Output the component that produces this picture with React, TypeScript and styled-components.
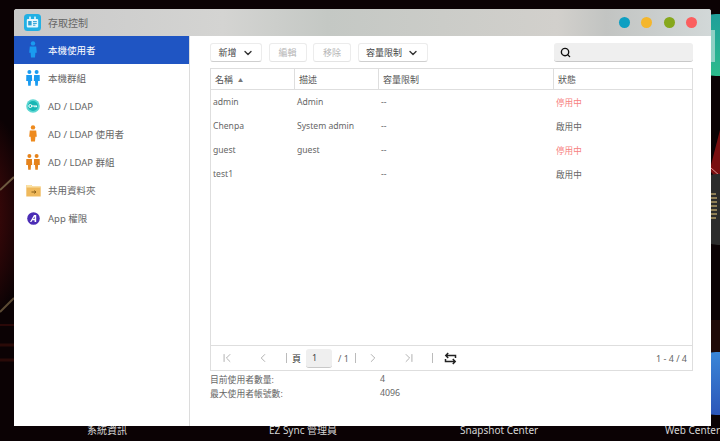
import React from 'react';
import styled, { createGlobalStyle } from 'styled-components';
import { ChevronDown, ChevronLeft, ChevronRight, ChevronFirst, ChevronLast, Search } from 'lucide-react';

const GlobalStyle = createGlobalStyle`
  html, body { margin: 0; padding: 0; height: 100%; }
  body { font-family: "Noto Sans", "Noto Sans CJK TC", sans-serif; font-size: 9.5px; color: #555; }
  #root { height: 100%; }
`;

interface UserRow {
  name: string;
  desc: string;
  quota: string;
  status: string;
  disabled?: boolean;
}

const users: UserRow[] = [
  { name: 'admin', desc: 'Admin', quota: '--', status: '停用中', disabled: true },
  { name: 'Chenpa', desc: 'System admin', quota: '--', status: '啟用中' },
  { name: 'guest', desc: 'guest', quota: '--', status: '停用中', disabled: true },
  { name: 'test1', desc: '', quota: '--', status: '啟用中' },
];

const PersonIcon = ({ color }: { color: string }) => (
  <svg width="10" height="18" viewBox="0 0 10 18">
    <circle cx="5" cy="2.4" r="2.2" fill={color} />
    <path d="M1.8 5.5h6.4l.6 6.2H7.4L7 16.5H3l-.4-4.8H1.2z" fill={color} />
  </svg>
);

const PairIcon = ({ color }: { color: string }) => (
  <svg width="14" height="16" viewBox="0 0 14 16">
    <circle cx="3.4" cy="2" r="2" fill={color} />
    <circle cx="10.6" cy="2" r="2" fill={color} />
    <path d="M.3 5h5.6l.3 6H5l-.3 4.8H2.2L1.9 11H.2z" fill={color} />
    <path d="M8.1 5h5.6l.1 6h-1.7l-.3 4.8H9.3L9 11H7.8z" fill={color} />
  </svg>
);

const KeyIcon = () => (
  <svg width="14" height="14" viewBox="0 0 14 14">
    <circle cx="7" cy="7" r="6.8" fill="#5bd6d2" />
    <circle cx="7" cy="7" r="5" fill="#19b6b4" />
    <circle cx="4.3" cy="7" r="1.5" fill="none" stroke="#fff" strokeWidth="1" />
    <path d="M5.8 7h5.2M9 7v1.4M10.6 7v1.2" stroke="#fff" strokeWidth="1" fill="none" />
  </svg>
);

const FolderIcon = () => (
  <svg width="15" height="13" viewBox="0 0 15 13">
    <path d="M.3 1h5l1.2 1.4h8.2V12.6H.3z" fill="#efb95c" />
    <path d="M.3 1h5l1.2 1.4h8.2v1.2H.3z" fill="#fbe2a6" />
    <path d="M5.5 8h4.4M8.3 6.6 9.9 8 8.3 9.4" stroke="#7a5310" strokeWidth=".9" fill="none" />
  </svg>
);

const AppIcon = () => (
  <svg width="13" height="13" viewBox="0 0 13 13">
    <circle cx="6.5" cy="6.5" r="6.3" fill="#4b2db5" />
    <path d="M3 10 7 3h2.2v7H7.6V8.2H5.4L4.4 10z" fill="#fff" />
    <path d="M6.1 7h1.5V4.6z" fill="#4b2db5" />
  </svg>
);

const AppLogo = () => (
  <svg width="17" height="17" viewBox="0 0 17 17">
    <rect width="17" height="17" rx="3.5" fill="#22b0e4" />
    <rect x="5" y="2.6" width="2" height="3" fill="#bfeafa" />
    <rect x="10" y="2.6" width="2" height="3" fill="#bfeafa" />
    <rect x="2.8" y="5" width="11.4" height="8.6" rx="1" fill="#e6f7fd" />
    <rect x="4.2" y="7" width="3.4" height="4.4" fill="#2a9fd4" />
    <path d="M9 7.6h3.8M9 9.4h3.8M9 11.2h2.4" stroke="#2a9fd4" strokeWidth="1" />
  </svg>
);

const SwapIcon = () => (
  <svg width="13" height="13" viewBox="0 0 13 13" fill="none" stroke="#222" strokeWidth="1.5">
    <path d="M11.5 6V3.5H1.8M4.2 1 1.8 3.5 4.2 6" />
    <path d="M1.5 7v2.5h9.7M8.8 7l2.4 2.5L8.8 12" />
  </svg>
);

// desktop behind the window: wallpaper streaks and the app tiles peeking out
const WallpaperArt = () => (
  <WallpaperSvg width="720" height="441" viewBox="0 0 720 441">
    <defs>
      <radialGradient id="glowLeft" cx="0.2" cy="0.5" r="0.6">
        <stop offset="0" stopColor="#5a0c0c" />
        <stop offset="1" stopColor="#5a0c0c" stopOpacity="0" />
      </radialGradient>
      <linearGradient id="tealFill" x1="0" y1="0" x2="0" y2="1">
        <stop offset="0" stopColor="#1f9f9a" />
        <stop offset="1" stopColor="#2dbb8c" />
      </linearGradient>
      <linearGradient id="blueFill" x1="0" y1="0" x2="0" y2="1">
        <stop offset="0" stopColor="#3a86d8" />
        <stop offset="1" stopColor="#2c56b8" />
      </linearGradient>
    </defs>
    <ellipse cx="0" cy="215" rx="50" ry="95" fill="url(#glowLeft)" />
    <path d="M0 190 14 177" stroke="#6e5a40" strokeWidth="2" />
    <path d="M0 312 14 298" stroke="#5c4a34" strokeWidth="2" />
    <path d="M0 325h14" stroke="#4a0f0c" strokeWidth="1" />
    <path d="M0 345h14M0 360h14" stroke="#2a0a08" strokeWidth="3" />
    <path d="M711 165 720 130V182L711 172z" fill="#7a0f10" />
    <path d="M711 168 720 176" stroke="#e09090" strokeWidth="1" />
    <rect x="711" y="320" width="9" height="32" fill="#1f0a08" />
    <rect x="690" y="14" width="60" height="62" rx="26" fill="url(#tealFill)" />
    <rect x="711" y="30" width="4" height="32" fill="#8fd0c4" />
    <rect x="690" y="174" width="60" height="71" rx="28" fill="#2c2c2c" />
    <path d="M711 194h5M711 198h6M711 202h6M711 206h6M711 210h6M711 214h6M711 218h5" stroke="#b09a66" strokeWidth="1.4" />
    <rect x="690" y="352" width="60" height="63" rx="26" fill="url(#blueFill)" />
  </WallpaperSvg>
);

const navItems: { label: string; icon: React.ReactNode }[] = [
  { label: '本機使用者', icon: <PersonIcon color="#1a9bf0" /> },
  { label: '本機群組', icon: <PairIcon color="#1a9bf0" /> },
  { label: 'AD / LDAP', icon: <KeyIcon /> },
  { label: 'AD / LDAP 使用者', icon: <PersonIcon color="#ee8a1d" /> },
  { label: 'AD / LDAP 群組', icon: <PairIcon color="#e5831c" /> },
  { label: '共用資料夾', icon: <FolderIcon /> },
  { label: 'App 權限', icon: <AppIcon /> },
];

const App: React.FC = () => {
  return (
    <Desktop>
      <GlobalStyle />
      <WallpaperArt />
      <DesktopLabel $left={87}>系統資訊</DesktopLabel>
      <DesktopLabel $left={269}>EZ Sync 管理員</DesktopLabel>
      <DesktopLabel $left={460}>Snapshot Center</DesktopLabel>
      <DesktopLabel $left={665}>Web Center</DesktopLabel>

      <Window>
        <TitleBar>
          <AppLogo />
          <WindowTitle>存取控制</WindowTitle>
          <WindowDots>
            <Dot $color="#0e9fc2" />
            <Dot $color="#f4b62c" />
            <Dot $color="#86a81c" />
            <Dot $color="#fb5f5f" />
          </WindowDots>
        </TitleBar>

        <WindowBody>
          <Sidebar>
            {navItems.map((item, i) => (
              <NavItem key={item.label} $active={i === 0}>
                <NavIcon>{item.icon}</NavIcon>
                {item.label}
              </NavItem>
            ))}
          </Sidebar>

          <Main>
            <Toolbar>
              <ToolButton $width={52}>
                新增 <ChevronDown size={12} strokeWidth={2.8} color="#333" />
              </ToolButton>
              <ToolButton $width={38} $disabled>編輯</ToolButton>
              <ToolButton $width={38} $disabled>移除</ToolButton>
              <ToolButton $width={70}>
                容量限制 <ChevronDown size={12} strokeWidth={2.8} color="#333" />
              </ToolButton>
              <SearchBox>
                <Search size={11} strokeWidth={3} color="#111" />
              </SearchBox>
            </Toolbar>

            <Table>
              <HeaderRow>
                <HeaderCell>名稱 <SortMark>▲</SortMark></HeaderCell>
                <HeaderCell>描述</HeaderCell>
                <HeaderCell>容量限制</HeaderCell>
                <HeaderCell>狀態</HeaderCell>
              </HeaderRow>
              <TableRows>
                {users.map((u) => (
                  <Row key={u.name}>
                    <Cell>{u.name}</Cell>
                    <Cell>{u.desc}</Cell>
                    <Cell>{u.quota}</Cell>
                    <Cell $danger={u.disabled}>{u.status}</Cell>
                  </Row>
                ))}
              </TableRows>
              <Pager>
                <PagerButton $ml={9}><ChevronFirst size={14} strokeWidth={1.3} /></PagerButton>
                <PagerButton $ml={22}><ChevronLeft size={14} strokeWidth={1.3} /></PagerButton>
                <PagerSep $ml={16} />
                <PageLabel>頁</PageLabel>
                <PageInput>1</PageInput>
                <PageTotal>/ 1</PageTotal>
                <PagerSep $ml={6} />
                <PagerButton $ml={10}><ChevronRight size={14} strokeWidth={1.3} /></PagerButton>
                <PagerButton $ml={22}><ChevronLast size={14} strokeWidth={1.3} /></PagerButton>
                <PagerSep $ml={16} />
                <PagerButton $ml={11}><SwapIcon /></PagerButton>
                <PagerCount>1 - 4 / 4</PagerCount>
              </Pager>
            </Table>

            <Stats>
              <StatLabel>目前使用者數量:</StatLabel>
              <span>4</span>
              <StatLabel>最大使用者帳號數:</StatLabel>
              <span>4096</span>
            </Stats>
          </Main>
        </WindowBody>
      </Window>
    </Desktop>
  );
};

const Desktop = styled.div`
  position: relative;
  width: 720px;
  height: 441px;
  overflow: hidden;
  padding: 9px 9px 0 14px;
  box-sizing: border-box;
  background: #0b0204;
`;

const WallpaperSvg = styled.svg`
  position: absolute;
  left: 0;
  top: 0;
`;

const DesktopLabel = styled.span<{ $left: number }>`
  position: absolute;
  left: ${({ $left }) => $left}px;
  top: 423px;
  font-size: 10px;
  line-height: 14px;
  color: #d6d6d6;
  white-space: nowrap;
`;

const Window = styled.div`
  position: relative;
  width: 697px;
  height: 417px;
  display: flex;
  flex-direction: column;
  background: #fff;
  border-radius: 3px 3px 0 0;
  overflow: hidden;
`;

const TitleBar = styled.div`
  height: 27px;
  flex: none;
  display: flex;
  align-items: center;
  padding: 0 14px 0 10px;
  background: linear-gradient(90deg, #c9c9c9 0%, #d4d4d2 30%, #c4c8c4 45%, #d2d0cc 78%, #c2c4c2 85%, #d2d8d8 100%);
`;

const WindowTitle = styled.span`
  margin-left: 7px;
  font-size: 10px;
  color: #666;
`;

const WindowDots = styled.div`
  margin-left: auto;
  display: flex;
  gap: 11.3px;
`;

const Dot = styled.span<{ $color: string }>`
  width: 11px;
  height: 11px;
  border-radius: 50%;
  background: ${({ $color }) => $color};
`;

const WindowBody = styled.div`
  flex: 1;
  display: flex;
  min-height: 0;
`;

const Sidebar = styled.nav`
  width: 175px;
  flex: none;
  border-right: 1px solid #dcdcdc;
`;

const NavItem = styled.div<{ $active?: boolean }>`
  height: 28px;
  display: flex;
  align-items: center;
  font-size: 9.5px;
  color: ${({ $active }) => ($active ? '#fff' : '#666')};
  background: ${({ $active }) => ($active ? '#1f55c3' : 'transparent')};
`;

const NavIcon = styled.span`
  width: 16px;
  margin: 0 7px 0 11px;
  flex: none;
  display: flex;
  justify-content: center;
`;

const Main = styled.div`
  flex: 1;
  min-width: 0;
  padding: 7px 18px 0 20px;
`;

const Toolbar = styled.div`
  height: 19px;
  display: flex;
  gap: 6.5px;
  margin-bottom: 6px;
`;

const ToolButton = styled.div<{ $width: number; $disabled?: boolean }>`
  width: ${({ $width }) => $width}px;
  box-sizing: border-box;
  display: flex;
  align-items: center;
  justify-content: center;
  gap: 5px;
  font-size: 9px;
  color: ${({ $disabled }) => ($disabled ? '#b5b5b5' : '#444')};
  background: #fff;
  border: 1px solid #ececec;
  border-bottom-color: ${({ $disabled }) => ($disabled ? '#e4e4e4' : '#cfcfcf')};
  border-radius: 3px;
`;

const SearchBox = styled.div`
  margin-left: auto;
  width: 139px;
  box-sizing: border-box;
  padding-left: 6px;
  display: flex;
  align-items: center;
  background: #efefef;
  border-bottom: 1px solid #c8c8c8;
  border-radius: 3px;
`;

const Table = styled.div`
  height: 303px;
  box-sizing: border-box;
  display: flex;
  flex-direction: column;
  border: 1px solid #dedede;
`;

const HeaderRow = styled.div`
  height: 20px;
  flex: none;
  display: grid;
  grid-template-columns: 83px 84px 175px 1fr;
  border-bottom: 1px solid #dedede;
`;

const HeaderCell = styled.div`
  padding-left: 4px;
  display: flex;
  align-items: center;
  gap: 5px;
  font-size: 9px;
  color: #555;
  & + & { border-left: 1px solid #dedede; }
`;

const SortMark = styled.span`
  font-size: 5px;
  color: #777;
`;

const TableRows = styled.div`
  flex: 1;
`;

const Row = styled.div`
  height: 24px;
  display: grid;
  grid-template-columns: 83px 84px 175px 1fr;
  align-items: center;
`;

const Cell = styled.div<{ $danger?: boolean }>`
  padding-left: 2px;
  font-size: 8.6px;
  color: ${({ $danger }) => ($danger ? '#f77f7f' : '#666')};
  & + & { padding-left: 3px; }
`;

const Pager = styled.div`
  height: 24px;
  flex: none;
  display: flex;
  align-items: center;
  border-top: 1px solid #dedede;
`;

const PagerButton = styled.span<{ $ml: number }>`
  margin-left: ${({ $ml }) => $ml}px;
  display: flex;
  color: #999;
`;

const PagerSep = styled.span<{ $ml: number }>`
  margin-left: ${({ $ml }) => $ml}px;
  width: 1px;
  height: 10px;
  background: #bbb;
`;

const PageLabel = styled.span`
  margin-left: 5px;
  font-size: 9px;
  color: #333;
`;

const PageInput = styled.span`
  margin-left: 5px;
  width: 26px;
  height: 19px;
  box-sizing: border-box;
  padding-left: 6px;
  display: flex;
  align-items: center;
  font-size: 9px;
  color: #444;
  background: #efefef;
  border-bottom: 1px solid #c8c8c8;
  border-radius: 3px;
`;

const PageTotal = styled.span`
  margin-left: 6px;
  font-size: 9px;
  color: #666;
`;

const PagerCount = styled.span`
  margin-left: auto;
  margin-right: 5px;
  font-size: 9px;
  color: #666;
`;

const Stats = styled.div`
  margin-top: 1px;
  display: grid;
  grid-template-columns: 170px 1fr;
  grid-auto-rows: 14px;
  align-items: center;
  font-size: 8.8px;
  color: #666;
`;

const StatLabel = styled.span`
  white-space: nowrap;
`;

export default App;
